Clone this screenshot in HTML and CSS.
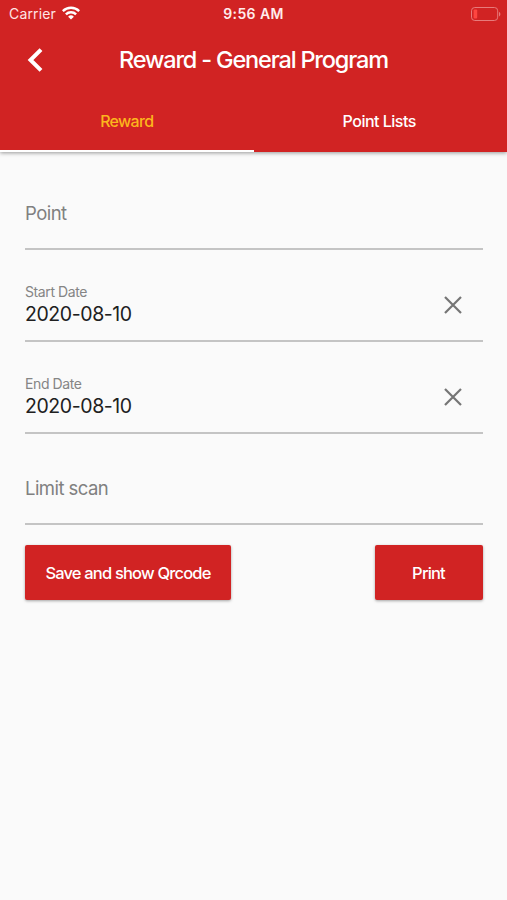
FILE: index.html
```html
<!DOCTYPE html>
<html lang="en">
<head>
<meta charset="utf-8">
<meta name="viewport" content="width=device-width, initial-scale=1">
<title>Reward - General Program</title>
<link rel="stylesheet" href="styles.css">
</head>
<body>
<header class="app-header">
  <div class="status-bar">
    <div class="network">
      <span class="carrier">Carrier</span>
      <svg class="wifi" width="18" height="14" viewBox="0 0 18 14" fill="none" stroke="#fff" stroke-width="2.5">
        <path d="M.8 5.1a11.8 11.8 0 0 1 16.4 0"/>
        <path d="M3.9 8.3a7.4 7.4 0 0 1 10.2 0"/>
        <path d="M9 13.6 6.1 10.7a4.2 4.2 0 0 1 5.8 0z" fill="#fff" stroke="none"/>
      </svg>
    </div>
    <span class="clock">9:56 AM</span>
    <svg class="battery" width="30" height="14" viewBox="0 0 30 14">
      <rect x=".5" y=".5" width="26.2" height="13" rx="3.3" fill="none" stroke="#e77b7b"/>
      <rect x="2.6" y="2.6" width="3.6" height="8.8" rx="1" fill="#ff4540"/>
      <path d="M28 5v4.4c1.8-.6 1.8-3.8 0-4.4z" fill="#e77b7b"/>
    </svg>
  </div>
  <div class="title-bar">
    <svg class="back" width="16" height="24" viewBox="0 0 16 24" fill="none" stroke="#fff" stroke-width="4">
      <path d="M14 1.6 3.5 12 14 22.4"/>
    </svg>
    <h1 class="title">Reward - General Program</h1>
  </div>
  <nav class="tabs">
    <a class="tab tab-active"><span>Reward</span></a>
    <a class="tab tab-points"><span>Point Lists</span></a>
  </nav>
</header>
<main class="form">
  <div class="field"><span class="placeholder">Point</span></div>
  <div class="field field-date">
    <div class="entry"><span class="label">Start Date</span><span class="value">2020-08-10</span></div>
    <svg class="clear" width="18" height="18" viewBox="0 0 18 18" stroke="#757575" stroke-width="2.2"><path d="M1 1l16 16M17 1 1 17"/></svg>
  </div>
  <div class="field field-date">
    <div class="entry"><span class="label">End Date</span><span class="value">2020-08-10</span></div>
    <svg class="clear" width="18" height="18" viewBox="0 0 18 18" stroke="#757575" stroke-width="2.2"><path d="M1 1l16 16M17 1 1 17"/></svg>
  </div>
  <div class="field field-limit"><span class="placeholder">Limit scan</span></div>
  <div class="actions">
    <button class="button button-save"><span>Save and show Qrcode</span></button>
    <button class="button button-print"><span>Print</span></button>
  </div>
</main>
</body>
</html>
```
FILE: styles.css
```css
* { box-sizing: border-box; }
body {
  margin: 0;
  min-height: 900px;
  background: #fafafa;
  color: #202020;
  font-family: Inter, "Liberation Sans", sans-serif;
}
span, h1 { white-space: nowrap; }
.app-header {
  height: 152px;
  background: #d12323;
  color: #fff;
  box-shadow: 0 1px 4px rgba(0, 0, 0, .4);
}
.status-bar {
  display: grid;
  grid-template-columns: 1fr auto 1fr;
  align-items: center;
  height: 27px;
  padding: 0 6px 0 9px;
}
.network { display: flex; align-items: center; gap: 6px; }
.carrier { font-size: 14px; letter-spacing: .15px; color: #ffe5e5; }
.wifi { margin-top: -1px; }
.clock { margin-right: 3px; font-size: 14px; font-weight: 600; letter-spacing: .4px; color: #ffecec; }
.battery { justify-self: end; }
.title-bar {
  display: flex;
  align-items: center;
  height: 65px;
  padding-left: 27px;
}
.title {
  margin: 0 0 0 76px;
  font-size: 23.5px;
  font-weight: 500;
  letter-spacing: -1.18px;
  line-height: 30px;
}
.tabs { display: grid; grid-template-columns: 1fr 1fr; height: 60px; }
.tab {
  display: flex;
  justify-content: center;
  align-items: center;
  border-bottom: 2px solid transparent;
  font-size: 16px;
  font-weight: 500;
  letter-spacing: -.7px;
}
.tab-active { border-bottom-color: #fff; color: #fcb61d; }
.tab-points { padding-right: 2px; letter-spacing: -.5px; }
.form { padding: 1px 24.5px 0 25px; }
.field {
  display: flex;
  align-items: center;
  height: 92px;
  border-bottom: 2px solid #c4c4c4;
}
.field:first-child { height: 97px; padding-top: 25px; }
.placeholder { font-size: 18.5px; color: #808080; letter-spacing: -.55px; }
.field-date { justify-content: space-between; padding: 20px 20.5px 0 0; }
.entry { display: flex; flex-direction: column; }
.label { font-size: 14px; line-height: 18px; color: #858585; letter-spacing: -.4px; }
.value { font-size: 19.5px; line-height: 27px; letter-spacing: -.42px; }
.field-limit { height: 91px; padding-top: 18px; }
.actions { display: flex; justify-content: space-between; margin-top: 20px; }
.button {
  height: 55px;
  padding: 0;
  border: 0;
  border-radius: 2px;
  background: #d12323;
  box-shadow: 0 1px 3px rgba(0, 0, 0, .35);
  color: #fff;
  font: 500 16.5px Inter, "Liberation Sans", sans-serif;
  letter-spacing: -.82px;
}
.button-save { width: 206px; }
.button-print { width: 108px; }
```
